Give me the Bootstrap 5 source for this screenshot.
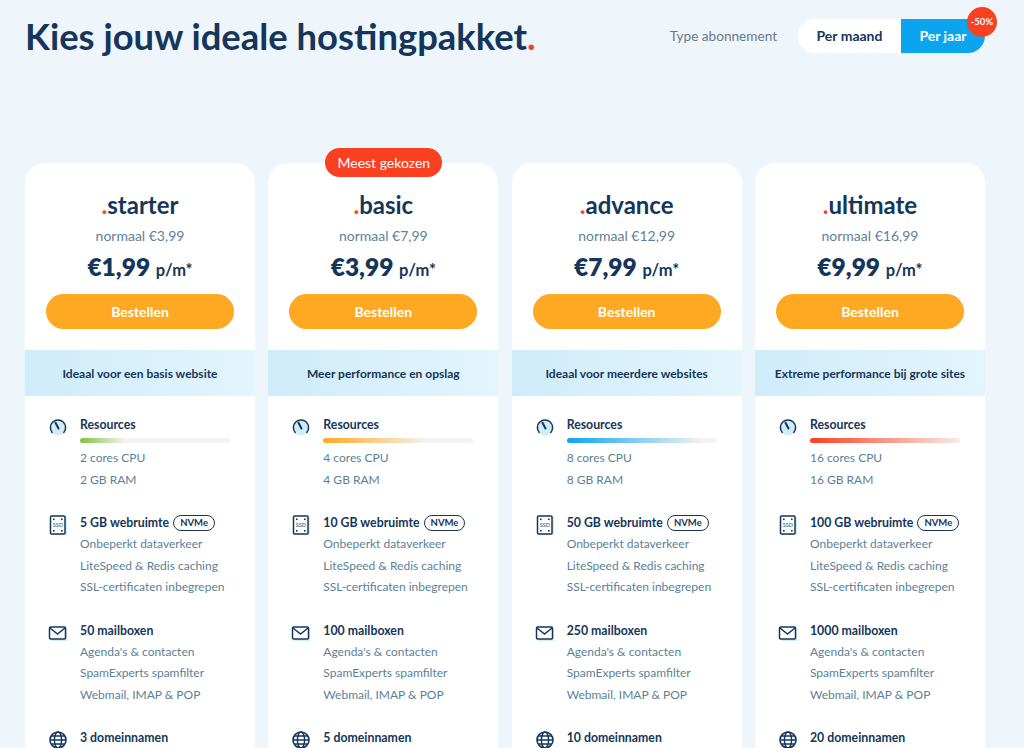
<!doctype html>
<html lang="nl">
<head>
<meta charset="utf-8">
<title>Hostingpakketten</title>
<link rel="stylesheet" href="https://cdn.jsdelivr.net/npm/bootstrap@5.3.0/dist/css/bootstrap.min.css">
<style>
html,body{height:748px;overflow:hidden}
body{background:#eff6fb;font-family:Lato,"Liberation Sans",sans-serif;color:#15365a}
.page-wrap{width:960px;margin-left:25px}
.top-bar{height:163px;padding-top:14px}
.main-title{font-size:36.4px;line-height:44px;font-weight:700;color:#15365a;margin:0}
.dot{color:#fb4022}
.type-label{font-size:13.6px;color:#66788d;margin-right:21px;line-height:21px}
.toggle{height:34px;margin-top:5px}
.toggle-a,.toggle-b{height:34px;font-size:14px;font-weight:700;line-height:34px;text-align:center}
.toggle-a{background:#fff;color:#15365a;border-radius:17px 0 0 17px;width:103px}
.toggle-b{background:#0ba5ef;color:#fff;border-radius:0 17px 17px 0;width:84px}
.off-badge{position:absolute;top:-12px;right:-12px;width:30px;height:30px;border-radius:50%;background:#fb4022;color:#fff;font-size:9.5px;font-weight:700;line-height:30px;text-align:center}
.plans{display:grid;grid-template-columns:repeat(4,230px);column-gap:13.33px}
.plan{background:#fff;border-radius:20px 20px 0 0;height:640px}
.plan-head{height:187px;padding:26px 21px 0;text-align:center}
.plan-name{font-size:24px;line-height:32px;font-weight:700;color:#15365a;margin:0}
.plan-old{font-size:14px;line-height:20px;color:#5e8298;margin-top:5px}
.plan-price{font-size:24.5px;line-height:32px;font-weight:800;color:#15365a;margin-top:5px}
.plan-price span{font-size:16.5px;font-weight:700}
.order-btn{display:block;width:100%;height:35px;padding:0;margin-top:8px;border:0;border-radius:18px;background:#ffa922;color:#fff;font-size:14px;font-weight:700;line-height:35px}
.ideal{height:46px;line-height:47px;text-align:center;font-size:12px;font-weight:700;color:#15365a;background:linear-gradient(90deg,#cfecfa,#e3f5fd);white-space:nowrap}
.feat-list{padding:18px 0 0 21px}
.feat{display:flex;margin-bottom:21.9px}
.feat-icon{width:34px;flex:none;padding-top:3px}
.feat-icon svg{display:block;width:20px;height:20px;margin-left:2px}
.feat-title{font-size:12.3px;line-height:21px;font-weight:700;color:#15365a;white-space:nowrap;display:flex;align-items:center}
.feat-line{font-size:12px;line-height:21.6px;color:#5b7f97;white-space:nowrap}
.meter{width:150px;height:5px;border-radius:3px;background:#f4f3f1;margin:3px 0 4px}
.fill-g{background:linear-gradient(90deg,#7dc243,#f4f3f1 30%)}
.fill-o{background:linear-gradient(90deg,#ffa922,#f4f3f1 70%)}
.fill-b{background:linear-gradient(90deg,#0ba5ef,#f4f3f1 90%)}
.fill-r{background:linear-gradient(90deg,#fb4022,#f6ece6 100%)}
.nvme{font-size:9.5px;line-height:14px;height:16px;padding:0 6px;margin-left:4px;border:1px solid #15365a;border-radius:8px;font-weight:700}
.popular{position:absolute;top:-15px;left:57px;height:29px;width:117px;line-height:29px;text-align:center;background:#fb4022;color:#fff;font-size:14px;border-radius:15px}
.ssd-text{font-family:Lato,"Liberation Sans",sans-serif;font-size:5.5px;font-weight:700;fill:#5b7f97}
</style>
</head>
<body>
<svg width="0" height="0" class="position-absolute">
<defs>
<symbol id="i-gauge" viewBox="0 0 20 20"><circle cx="10" cy="11" r="7.5" fill="#cfecfa" stroke="none"/><path d="M4.2 15.5A7.6 7.6 0 1 1 15.8 15.5" fill="none" stroke="#15365a" stroke-width="1.5" stroke-linecap="round"/><path d="M7.5 5.8 10.5 11.5" stroke="#15365a" stroke-width="2" stroke-linecap="round"/></symbol>
<symbol id="i-ssd" viewBox="0 0 20 20"><rect x="4" y="2" width="15" height="18" fill="#cfecfa"/><rect x="2.500" y="1" width="14.5" height="18" rx="1" fill="#fff" stroke="#15365a" stroke-width="1.5"/><rect x="5" y="3.5" width="1.6" height="1.6" fill="#15365a"/><rect x="13" y="3.5" width="1.6" height="1.6" fill="#15365a"/><rect x="5" y="15" width="1.6" height="1.6" fill="#15365a"/><rect x="13" y="15" width="1.6" height="1.6" fill="#15365a"/><text x="9.750" y="12" text-anchor="middle" class="ssd-text">SSD</text></symbol>
<symbol id="i-mail" viewBox="0 0 20 20"><rect x="3" y="6" width="16" height="12" fill="#cfecfa"/><rect x="1.500" y="4" width="16" height="12" rx="1.2" fill="#fff" stroke="#15365a" stroke-width="1.5"/><path d="M2 5 9.500 11 17 5" fill="none" stroke="#15365a" stroke-width="1.5"/></symbol>
<symbol id="i-globe" viewBox="0 0 20 20"><circle cx="10" cy="10" r="8" fill="#fff" stroke="#15365a" stroke-width="1.6"/><ellipse cx="10" cy="10" rx="3.600" ry="8" fill="none" stroke="#15365a" stroke-width="1.400"/><path d="M2 10H18M3.200 6H16.800M3.200 14H16.800" stroke="#15365a" stroke-width="1.400"/></symbol>
</defs>
</svg>
<main class="page-wrap">
<header class="top-bar d-flex justify-content-between align-items-start">
<h1 class="main-title">Kies jouw ideale hostingpakket<span class="dot">.</span></h1>
<div class="d-flex align-items-center toggle">
<span class="type-label">Type abonnement</span>
<div class="d-flex position-relative">
<div class="toggle-a">Per maand</div>
<div class="toggle-b">Per jaar</div>
<div class="off-badge">-50%</div>
</div>
</div>
</header>
<section class="plans">

<article class="plan position-relative">
<div class="plan-head">
<h2 class="plan-name"><span class="dot">.</span>starter</h2>
<div class="plan-old">normaal €3,99</div>
<div class="plan-price">€1,99 <span>p/m*</span></div>
<button class="btn order-btn">Bestellen</button>
</div>
<div class="ideal">Ideaal voor een basis website</div>
<div class="feat-list">
<div class="feat"><div class="feat-icon"><svg><use href="#i-gauge"/></svg></div><div><div class="feat-title">Resources</div><div class="meter fill-g"></div><div class="feat-line">2 cores CPU</div><div class="feat-line">2 GB RAM</div></div></div>
<div class="feat"><div class="feat-icon"><svg><use href="#i-ssd"/></svg></div><div><div class="feat-title">5 GB webruimte<span class="nvme">NVMe</span></div><div class="feat-line">Onbeperkt dataverkeer</div><div class="feat-line">LiteSpeed &amp; Redis caching</div><div class="feat-line">SSL-certificaten inbegrepen</div></div></div>
<div class="feat"><div class="feat-icon"><svg><use href="#i-mail"/></svg></div><div><div class="feat-title">50 mailboxen</div><div class="feat-line">Agenda's &amp; contacten</div><div class="feat-line">SpamExperts spamfilter</div><div class="feat-line">Webmail, IMAP &amp; POP</div></div></div>
<div class="feat"><div class="feat-icon"><svg><use href="#i-globe"/></svg></div><div><div class="feat-title">3 domeinnamen</div></div></div>
</div>
</article>

<article class="plan position-relative">
<div class="popular">Meest gekozen</div>
<div class="plan-head">
<h2 class="plan-name"><span class="dot">.</span>basic</h2>
<div class="plan-old">normaal €7,99</div>
<div class="plan-price">€3,99 <span>p/m*</span></div>
<button class="btn order-btn">Bestellen</button>
</div>
<div class="ideal">Meer performance en opslag</div>
<div class="feat-list">
<div class="feat"><div class="feat-icon"><svg><use href="#i-gauge"/></svg></div><div><div class="feat-title">Resources</div><div class="meter fill-o"></div><div class="feat-line">4 cores CPU</div><div class="feat-line">4 GB RAM</div></div></div>
<div class="feat"><div class="feat-icon"><svg><use href="#i-ssd"/></svg></div><div><div class="feat-title">10 GB webruimte<span class="nvme">NVMe</span></div><div class="feat-line">Onbeperkt dataverkeer</div><div class="feat-line">LiteSpeed &amp; Redis caching</div><div class="feat-line">SSL-certificaten inbegrepen</div></div></div>
<div class="feat"><div class="feat-icon"><svg><use href="#i-mail"/></svg></div><div><div class="feat-title">100 mailboxen</div><div class="feat-line">Agenda's &amp; contacten</div><div class="feat-line">SpamExperts spamfilter</div><div class="feat-line">Webmail, IMAP &amp; POP</div></div></div>
<div class="feat"><div class="feat-icon"><svg><use href="#i-globe"/></svg></div><div><div class="feat-title">5 domeinnamen</div></div></div>
</div>
</article>

<article class="plan position-relative">
<div class="plan-head">
<h2 class="plan-name"><span class="dot">.</span>advance</h2>
<div class="plan-old">normaal €12,99</div>
<div class="plan-price">€7,99 <span>p/m*</span></div>
<button class="btn order-btn">Bestellen</button>
</div>
<div class="ideal">Ideaal voor meerdere websites</div>
<div class="feat-list">
<div class="feat"><div class="feat-icon"><svg><use href="#i-gauge"/></svg></div><div><div class="feat-title">Resources</div><div class="meter fill-b"></div><div class="feat-line">8 cores CPU</div><div class="feat-line">8 GB RAM</div></div></div>
<div class="feat"><div class="feat-icon"><svg><use href="#i-ssd"/></svg></div><div><div class="feat-title">50 GB webruimte<span class="nvme">NVMe</span></div><div class="feat-line">Onbeperkt dataverkeer</div><div class="feat-line">LiteSpeed &amp; Redis caching</div><div class="feat-line">SSL-certificaten inbegrepen</div></div></div>
<div class="feat"><div class="feat-icon"><svg><use href="#i-mail"/></svg></div><div><div class="feat-title">250 mailboxen</div><div class="feat-line">Agenda's &amp; contacten</div><div class="feat-line">SpamExperts spamfilter</div><div class="feat-line">Webmail, IMAP &amp; POP</div></div></div>
<div class="feat"><div class="feat-icon"><svg><use href="#i-globe"/></svg></div><div><div class="feat-title">10 domeinnamen</div></div></div>
</div>
</article>

<article class="plan position-relative">
<div class="plan-head">
<h2 class="plan-name"><span class="dot">.</span>ultimate</h2>
<div class="plan-old">normaal €16,99</div>
<div class="plan-price">€9,99 <span>p/m*</span></div>
<button class="btn order-btn">Bestellen</button>
</div>
<div class="ideal">Extreme performance bij grote sites</div>
<div class="feat-list">
<div class="feat"><div class="feat-icon"><svg><use href="#i-gauge"/></svg></div><div><div class="feat-title">Resources</div><div class="meter fill-r"></div><div class="feat-line">16 cores CPU</div><div class="feat-line">16 GB RAM</div></div></div>
<div class="feat"><div class="feat-icon"><svg><use href="#i-ssd"/></svg></div><div><div class="feat-title">100 GB webruimte<span class="nvme">NVMe</span></div><div class="feat-line">Onbeperkt dataverkeer</div><div class="feat-line">LiteSpeed &amp; Redis caching</div><div class="feat-line">SSL-certificaten inbegrepen</div></div></div>
<div class="feat"><div class="feat-icon"><svg><use href="#i-mail"/></svg></div><div><div class="feat-title">1000 mailboxen</div><div class="feat-line">Agenda's &amp; contacten</div><div class="feat-line">SpamExperts spamfilter</div><div class="feat-line">Webmail, IMAP &amp; POP</div></div></div>
<div class="feat"><div class="feat-icon"><svg><use href="#i-globe"/></svg></div><div><div class="feat-title">20 domeinnamen</div></div></div>
</div>
</article>

</section>
</main>
</body>
</html>
